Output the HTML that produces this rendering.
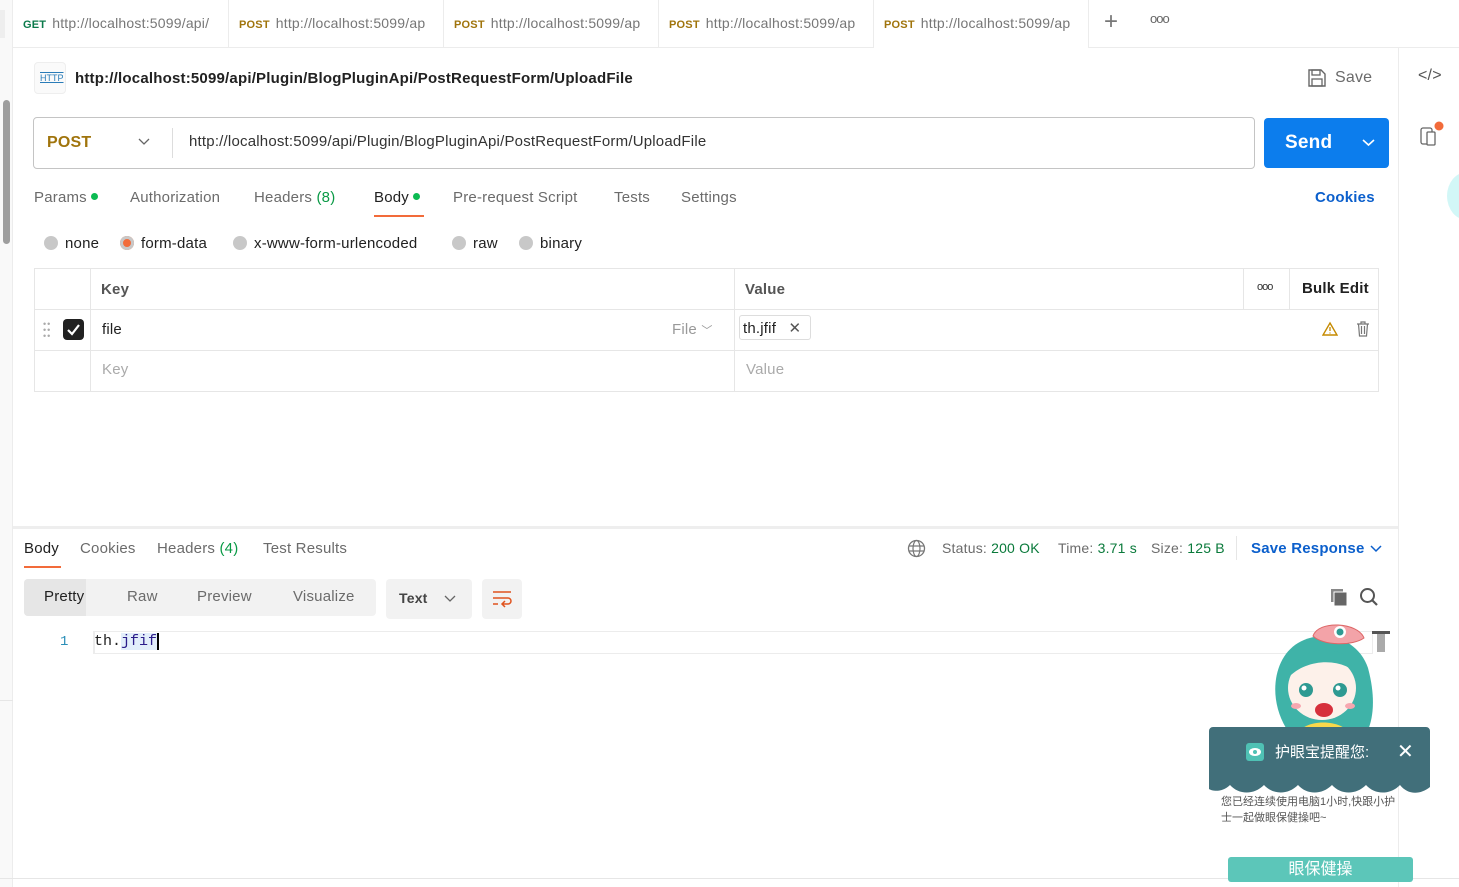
<!DOCTYPE html>
<html><head><meta charset="utf-8"><style>
*{box-sizing:border-box;margin:0;padding:0}
body{width:1459px;height:887px;overflow:hidden;background:#fff;font-family:"Liberation Sans","Noto Sans CJK SC",sans-serif;font-size:15px;color:#212121;position:relative;letter-spacing:0.2px}
.a{position:absolute;white-space:nowrap}
.g{color:#6b6b6b}
.tab{position:absolute;top:0;height:47px;border-right:1px solid #ececec;padding:15px 0 0 10px;font-size:14px;color:#777;overflow:hidden}
.tab b{font-size:11px;margin-right:6px;color:#a0740c}
.rad{display:inline-block;width:14px;height:14px;border-radius:50%;background:#c8c8c8;vertical-align:-2px;margin-right:7px}
</style></head><body>
<div class="a" style="left:0;top:0;width:13px;height:887px;background:#f9f9f9;border-right:1px solid #ececec"></div>
<div class="a" style="left:3px;top:100px;width:7px;height:144px;background:#9e9e9e;border-radius:4px"></div>
<div class="a" style="left:0;top:700px;width:13px;height:1px;background:#e6e6e6"></div>
<div class="a" style="left:0;top:10px;width:5px;height:28px;background:#eee"></div>
<div class="a" style="left:13px;top:47px;width:1446px;height:1px;background:#ececec"></div>
<div class="tab" style="left:13px;width:216px"><b style="color:#0b7a4b">GET</b>http://localhost:5099/api/</div>
<div class="tab" style="left:229px;width:215px"><b>POST</b>http://localhost:5099/ap</div>
<div class="tab" style="left:444px;width:215px"><b>POST</b>http://localhost:5099/ap</div>
<div class="tab" style="left:659px;width:215px"><b>POST</b>http://localhost:5099/ap</div>
<div class="tab" style="left:874px;width:215px;background:#fff;height:48px"><b>POST</b>http://localhost:5099/ap</div>
<div class="a" style="left:1104px;top:8px;font-size:24px;color:#777;font-weight:200">+</div>
<div class="a" style="left:1150px;top:11px;font-size:13px;color:#666;letter-spacing:-1px">ooo</div>
<div class="a" style="left:1398px;top:48px;width:1px;height:839px;background:#ececec"></div>
<div class="a" style="left:1418px;top:67px;font-size:16px;color:#555">&lt;/&gt;</div>
<svg class="a" style="left:1418px;top:120px" width="26" height="28"><rect x="3" y="8" width="11" height="16" rx="2" fill="none" stroke="#666" stroke-width="1.3"/><rect x="9" y="12" width="8" height="13" rx="1" fill="#fff" stroke="#666" stroke-width="1.3"/><circle cx="21" cy="6" r="4.5" fill="#f26b3a"/></svg>
<div class="a" style="left:1447px;top:172px;width:40px;height:48px;border-radius:50%;background:#d2f7f7"></div>
<div class="a" style="left:34px;top:62px;width:32px;height:32px;border:1px solid #eee;border-radius:4px;background:#fafafa;color:#2a7cb8;font-size:9px;padding:10px 0 0 5px;text-decoration:underline overline;letter-spacing:0">HTTP</div>
<div class="a" style="left:75px;top:70px;font-size:15px;font-weight:bold;color:#212121">http://localhost:5099/api/Plugin/BlogPluginApi/PostRequestForm/UploadFile</div>
<svg class="a" style="left:1307px;top:68px" width="20" height="20"><path d="M2 2h12l4 4v12H2z" fill="none" stroke="#666" stroke-width="1.4"/><rect x="5" y="2" width="8" height="5" fill="none" stroke="#666" stroke-width="1.3"/><rect x="5" y="11" width="10" height="7" fill="none" stroke="#666" stroke-width="1.3"/></svg>
<div class="a g" style="left:1335px;top:69px;font-size:16px">Save</div>
<div class="a" style="left:33px;top:117px;width:1222px;height:52px;border:1px solid #c4c4c4;border-radius:4px"></div>
<div class="a" style="left:47px;top:134px;font-size:16px;font-weight:bold;color:#a0740c">POST</div>
<svg class="a" style="left:138px;top:138px" width="12" height="8"><path d="M1 1l5 5 5-5" fill="none" stroke="#666" stroke-width="1.3"/></svg>
<div class="a" style="left:172px;top:128px;width:1px;height:30px;background:#ddd"></div>
<div class="a" style="left:189px;top:133px;font-size:15px;color:#333">http://localhost:5099/api/Plugin/BlogPluginApi/PostRequestForm/UploadFile</div>
<div class="a" style="left:1264px;top:118px;width:125px;height:50px;background:#0c7ded;border-radius:4px"></div>
<div class="a" style="left:1285px;top:132px;font-size:19px;font-weight:bold;color:#fff">Send</div>
<svg class="a" style="left:1362px;top:139px" width="13" height="8"><path d="M1 1l5.5 5 5.5-5" fill="none" stroke="#fff" stroke-width="1.6"/></svg>
<div class="a g" style="left:34px;top:189px">Params <span style="display:inline-block;width:7px;height:7px;border-radius:50%;background:#0cbb52;vertical-align:2px"></span></div>
<div class="a g" style="left:130px;top:189px">Authorization</div>
<div class="a g" style="left:254px;top:189px">Headers <span style="color:#0a9a46">(8)</span></div>
<div class="a" style="left:374px;top:189px;color:#212121">Body <span style="display:inline-block;width:7px;height:7px;border-radius:50%;background:#0cbb52;vertical-align:2px"></span></div>
<div class="a" style="left:374px;top:215px;width:50px;height:2px;background:#f26b3a"></div>
<div class="a g" style="left:453px;top:189px">Pre-request Script</div>
<div class="a g" style="left:614px;top:189px">Tests</div>
<div class="a g" style="left:681px;top:189px">Settings</div>
<div class="a" style="left:1315px;top:189px;color:#0b5fcc;font-weight:bold">Cookies</div>
<div class="a" style="left:44px;top:235px"><span class="rad"></span>none</div>
<div class="a" style="left:120px;top:235px"><span class="rad" style="background:#f26b3a;box-shadow:inset 0 0 0 3px #c8c8c8"></span>form-data</div>
<div class="a" style="left:233px;top:235px"><span class="rad"></span>x-www-form-urlencoded</div>
<div class="a" style="left:452px;top:235px"><span class="rad"></span>raw</div>
<div class="a" style="left:519px;top:235px"><span class="rad"></span>binary</div>
<div class="a" style="left:34px;top:268px;width:1345px;height:124px;border:1px solid #e6e6e6"></div>
<div class="a" style="left:34px;top:309px;width:1345px;height:1px;background:#e6e6e6"></div>
<div class="a" style="left:34px;top:350px;width:1345px;height:1px;background:#e6e6e6"></div>
<div class="a" style="left:90px;top:268px;width:1px;height:124px;background:#e6e6e6"></div>
<div class="a" style="left:734px;top:268px;width:1px;height:124px;background:#e6e6e6"></div>
<div class="a" style="left:1243px;top:268px;width:1px;height:41px;background:#e6e6e6"></div>
<div class="a" style="left:1289px;top:268px;width:1px;height:41px;background:#e6e6e6"></div>
<div class="a" style="left:101px;top:281px;font-weight:bold;color:#555">Key</div>
<div class="a" style="left:745px;top:281px;font-weight:bold;color:#555">Value</div>
<div class="a" style="left:1257px;top:281px;font-size:11px;letter-spacing:-1px;color:#333">ooo</div>
<div class="a" style="left:1302px;top:280px;font-weight:bold;color:#212121">Bulk Edit</div>
<div class="a" style="left:43px;top:321px;font-size:9px;line-height:6px;color:#aaa;letter-spacing:1px">••<br>••<br>••</div>
<div class="a" style="left:63px;top:319px;width:21px;height:21px;background:#212121;border-radius:4px"></div>
<svg class="a" style="left:66px;top:322px" width="15" height="15"><path d="M2 8l4 4 7-9" fill="none" stroke="#fff" stroke-width="2.2"/></svg>
<div class="a" style="left:102px;top:321px">file</div>
<div class="a" style="left:672px;top:321px;color:#999">File <span style="font-size:11px">﹀</span></div>
<div class="a" style="left:739px;top:315px;width:72px;height:25px;border:1px solid #ddd;border-radius:3px;padding:3px 0 0 3px">th.jfif <span style="margin-left:8px;color:#555">✕</span></div>
<svg class="a" style="left:1322px;top:321px" width="16" height="16"><path d="M8 2L15 14H1z" fill="none" stroke="#c58a00" stroke-width="1.4"/><path d="M8 6v4M8 11.5v1" stroke="#c58a00" stroke-width="1.3"/></svg>
<svg class="a" style="left:1356px;top:321px" width="14" height="16"><path d="M1 3h12M5 3V1h4v2M2.5 3l1 12h7l1-12M5.5 5v8M8.5 5v8" fill="none" stroke="#777" stroke-width="1.2"/></svg>
<div class="a" style="left:102px;top:361px;color:#aaa">Key</div>
<div class="a" style="left:746px;top:361px;color:#aaa">Value</div>
<div class="a" style="left:13px;top:526px;width:1385px;height:3px;background:#eee"></div>
<div class="a" style="left:24px;top:540px;color:#212121">Body</div>
<div class="a" style="left:24px;top:566px;width:37px;height:2px;background:#f26b3a"></div>
<div class="a g" style="left:80px;top:540px">Cookies</div>
<div class="a g" style="left:157px;top:540px">Headers <span style="color:#0a9a46">(4)</span></div>
<div class="a g" style="left:263px;top:540px">Test Results</div>
<svg class="a" style="left:907px;top:539px" width="19" height="19"><circle cx="9.5" cy="9.5" r="8" fill="none" stroke="#777" stroke-width="1.3"/><ellipse cx="9.5" cy="9.5" rx="3.5" ry="8" fill="none" stroke="#777" stroke-width="1.2"/><path d="M2 7h15M2 12h15" stroke="#777" stroke-width="1.2"/></svg>
<div class="a g" style="left:942px;top:540px;font-size:14px">Status: <span style="color:#0a7a3b">200 OK</span></div>
<div class="a g" style="left:1058px;top:540px;font-size:14px">Time: <span style="color:#0a7a3b">3.71 s</span></div>
<div class="a g" style="left:1151px;top:540px;font-size:14px">Size: <span style="color:#0a7a3b">125 B</span></div>
<div class="a" style="left:1236px;top:536px;width:1px;height:24px;background:#e6e6e6"></div>
<div class="a" style="left:1251px;top:540px;color:#0b5fcc;font-weight:bold">Save Response</div>
<svg class="a" style="left:1370px;top:545px" width="12" height="8"><path d="M1 1l5 5 5-5" fill="none" stroke="#0b5fcc" stroke-width="1.5"/></svg>
<div class="a" style="left:24px;top:579px;width:352px;height:37px;background:#f2f2f2;border-radius:4px"></div>
<div class="a" style="left:24px;top:579px;width:62px;height:37px;background:#e6e6e6;border-radius:4px 0 0 4px"></div>
<div class="a" style="left:44px;top:588px;color:#212121">Pretty</div>
<div class="a g" style="left:127px;top:588px">Raw</div>
<div class="a g" style="left:197px;top:588px">Preview</div>
<div class="a g" style="left:293px;top:588px">Visualize</div>
<div class="a" style="left:386px;top:579px;width:86px;height:40px;background:#f2f2f2;border-radius:4px"></div>
<div class="a" style="left:399px;top:590px;font-weight:bold;color:#444;font-size:14px">Text</div>
<svg class="a" style="left:444px;top:595px" width="12" height="8"><path d="M1 1l5 5 5-5" fill="none" stroke="#666" stroke-width="1.3"/></svg>
<div class="a" style="left:482px;top:579px;width:40px;height:40px;background:#f2f2f2;border-radius:4px"></div>
<svg class="a" style="left:491px;top:589px" width="22" height="20"><path d="M2 3h18M2 9h15a3 3 0 010 6h-5M14 12l-3 3 3 3M2 15h5" fill="none" stroke="#e0531e" stroke-width="1.5"/></svg>
<svg class="a" style="left:1329px;top:587px" width="20" height="20"><rect x="2" y="2" width="12" height="13" fill="#888"/><rect x="5" y="5" width="13" height="14" fill="#666" stroke="#fff" stroke-width="1"/></svg>
<svg class="a" style="left:1359px;top:587px" width="20" height="20"><circle cx="8.5" cy="8.5" r="6.5" fill="none" stroke="#555" stroke-width="2"/><path d="M13 13l5 5" stroke="#555" stroke-width="2.2"/></svg>
<div class="a" style="left:93px;top:631px;width:1280px;height:23px;border:1px solid #ececec;border-left-width:2px"></div>
<div class="a" style="left:60px;top:634px;font-family:'Liberation Mono',monospace;color:#2a8fb8;font-size:14px">1</div>
<div class="a" style="left:94px;top:633px;font-family:'Liberation Mono',monospace;font-size:15px;letter-spacing:0">th.<span style="background:#e2eefb;color:#2b1c8a">jfif</span><span style="border-left:2px solid #000"> </span></div>
<div class="a" style="left:1372px;top:631px;width:18px;height:3px;background:#555"></div>
<div class="a" style="left:1377px;top:634px;width:8px;height:18px;background:#aaa"></div>
<div class="a" style="left:0;top:878px;width:1459px;height:1px;background:#e6e6e6"></div>
<svg class="a" style="left:1268px;top:618px" width="110" height="118">
<path d="M18 110 C0 80 5 40 30 25 C55 10 90 20 100 50 C108 80 105 100 100 112 Z" fill="#3fb3a8"/>
<ellipse cx="54" cy="70" rx="34" ry="32" fill="#fdf1ea"/>
<path d="M20 60 C25 25 85 20 92 60 C80 40 40 38 20 60Z" fill="#3fb3a8"/>
<circle cx="38" cy="72" r="7" fill="#2e9a92"/><circle cx="72" cy="72" r="7" fill="#2e9a92"/>
<circle cx="36" cy="70" r="2.5" fill="#fff"/><circle cx="70" cy="70" r="2.5" fill="#fff"/>
<ellipse cx="56" cy="92" rx="9" ry="7" fill="#d6303c"/>
<ellipse cx="28" cy="88" rx="5" ry="3" fill="#f7a7b0"/><ellipse cx="82" cy="88" rx="5" ry="3" fill="#f7a7b0"/>
<path d="M30 118 C32 100 78 100 82 118Z" fill="#f9d84b"/>
<path d="M45 18 C50 2 90 4 96 20 C85 28 55 28 45 18Z" fill="#f3a3a8" stroke="#d66" stroke-width="1"/>
<circle cx="72" cy="14" r="6" fill="#fff"/><circle cx="72" cy="14" r="3.5" fill="#2e9a92"/>
</svg>
<svg class="a" style="left:1209px;top:727px" width="221" height="68"><path d="M0 4a4 4 0 014-4h213a4 4 0 014 4v56c-10 8-22 8-30 -2c-10 10-25 10-34 0c-10 10-25 10-34 0c-10 10-25 10-34 0c-10 10-25 10-34 0c-10 10-25 10-34 0c-8 8-18 6-21 4z" fill="#416f7a"/></svg>
<svg class="a" style="left:1246px;top:743px" width="18" height="18"><rect width="18" height="18" rx="3" fill="#4fc1b4"/><ellipse cx="9" cy="9" rx="6" ry="4" fill="#fff"/><circle cx="9" cy="9" r="2" fill="#4fc1b4"/></svg>
<div class="a" style="left:1275px;top:741px;color:#fff;font-size:15px;letter-spacing:0">护眼宝提醒您:</div>
<div class="a" style="left:1397px;top:739px;color:#fff;font-size:20px">✕</div>
<div class="a" style="left:1221px;top:794px;font-size:11px;line-height:16px;color:#555;letter-spacing:0">您已经连续使用电脑1小时,快跟小护<br>士一起做眼保健操吧~</div>
<div class="a" style="left:1228px;top:857px;width:185px;height:25px;background:#5cc6b9;border-radius:3px;color:#fff;font-size:16px;text-align:center;line-height:26px;letter-spacing:0">眼保健操</div>
</body></html>
